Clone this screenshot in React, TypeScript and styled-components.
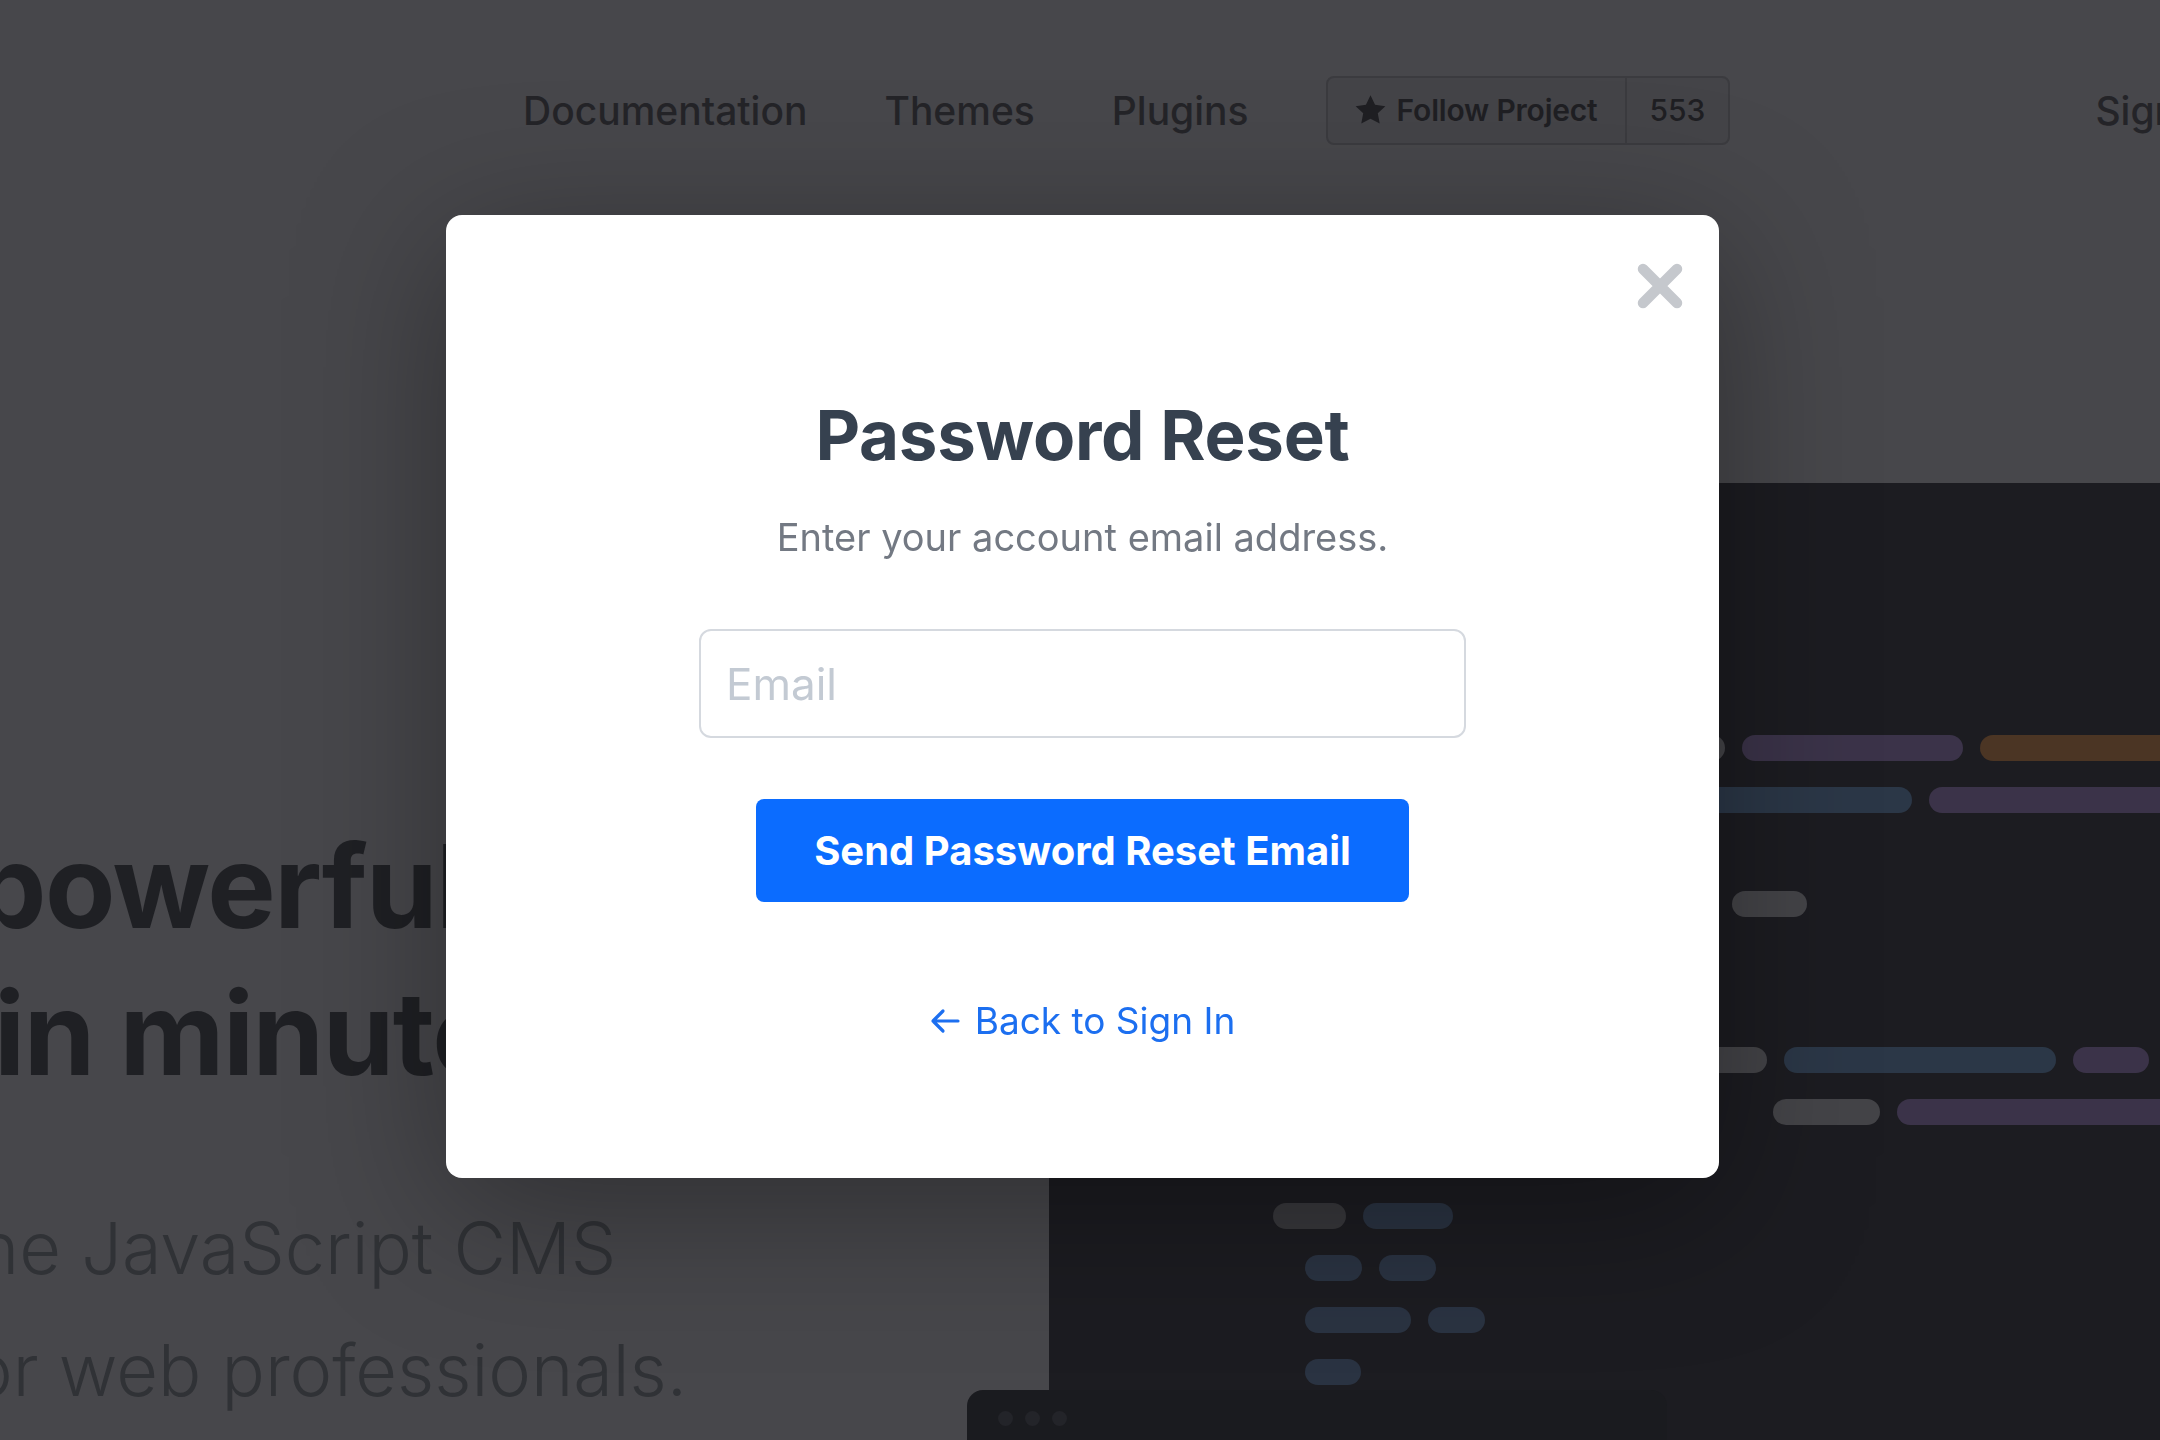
import { createGlobalStyle, styled } from "styled-components";

const GlobalStyle = createGlobalStyle`
  html, body {
    margin: 0;
    padding: 0;
    background: #47474b;
    overflow: hidden;
  }
  body {
    font-family: Inter, "Noto Sans", sans-serif;
    width: 2160px;
    height: 1440px;
  }
  * {
    box-sizing: border-box;
  }
`;

const Page = styled.div`
  width: 2160px;
  height: 1440px;
  overflow: hidden;
`;

const Nav = styled.nav`
  display: flex;
  align-items: center;
  height: 220px;
  padding-left: 523px;
  white-space: nowrap;
`;

const NavLinks = styled.div`
  display: flex;
  align-items: center;
  gap: 77px;
`;

const NavLink = styled.a`
  font-size: 39px;
  font-weight: 500;
  color: #242428;
  text-decoration: none;
  flex-shrink: 0;
`;

const SignIn = styled(NavLink)`
  margin-left: 365px;
`;

const FollowGroup = styled.div`
  display: flex;
  height: 69px;
  border: 2px solid #3b3b3f;
  border-radius: 8px;
  background: #444448;
  flex-shrink: 0;
`;

const FollowButton = styled.span`
  display: flex;
  align-items: center;
  gap: 10px;
  padding: 0 27px 0 26px;
  font-size: 30px;
  font-weight: 600;
  letter-spacing: -0.2px;
  color: #1f1f23;
`;

const FollowCount = styled.span`
  display: flex;
  align-items: center;
  padding: 0 23px;
  border-left: 2px solid #3b3b3f;
  font-size: 30px;
  font-weight: 500;
  color: #1f1f23;
`;

const Hero = styled.section`
  position: relative;
  display: grid;
  grid-template-columns: 1049px 1111px;
  height: 957px;
  margin-top: 263px;
`;

const HeroText = styled.div`
  padding-top: 330px;
  overflow: hidden;
  white-space: nowrap;
`;

const Heading = styled.h1`
  margin: 0;
  font-size: 115px;
  line-height: 147px;
  font-weight: 700;
  letter-spacing: -1.5px;
  color: #1f2024;
`;

const Tagline = styled.p`
  margin: 80px 0 0;
  font-size: 72px;
  line-height: 122px;
  font-weight: 300;
  color: #303236;
`;

const Line = styled.span<{ $shift: number }>`
  display: block;
  margin-left: ${(p) => p.$shift}px;
`;

const CodePanel = styled.div`
  background: #1c1c21;
  padding-top: 239px;
  overflow: hidden;
`;

const CodeLine = styled.div<{ $indent: number }>`
  display: flex;
  align-items: center;
  gap: 17px;
  height: 52px;
  padding-left: ${(p) => p.$indent}px;
`;

const Token = styled.span<{ $w: number; $c: string }>`
  flex-shrink: 0;
  width: ${(p) => p.$w}px;
  height: 26px;
  border-radius: 13px;
  background: ${(p) => p.$c};
`;

const WindowTab = styled.div`
  position: absolute;
  left: 967px;
  top: 907px;
  width: 700px;
  height: 90px;
  border-radius: 16px;
  background: #1a1b1f;
  display: flex;
  gap: 12px;
  padding: 21px 0 0 31px;
`;

const WindowDot = styled.span`
  width: 15px;
  height: 15px;
  border-radius: 50%;
  background: #232429;
`;

const Backdrop = styled.div`
  position: fixed;
  inset: 0;
  display: flex;
  justify-content: center;
  align-items: flex-start;
  padding: 215px 0 0 5px;
`;

const Modal = styled.div`
  position: relative;
  width: 1273px;
  background: #ffffff;
  border-radius: 16px;
  padding: 178px 0 135px;
  display: flex;
  flex-direction: column;
  align-items: center;
  box-shadow: 0 30px 150px rgba(0, 0, 0, 0.35);
`;

const CloseButton = styled.button`
  position: absolute;
  top: 47px;
  right: 35px;
  width: 48px;
  height: 48px;
  padding: 0;
  border: none;
  background: none;
  cursor: pointer;
`;

const Title = styled.h2`
  margin: 0;
  font-size: 69px;
  line-height: 85px;
  font-weight: 700;
  letter-spacing: -0.3px;
  color: #36414f;
`;

const Subtitle = styled.p`
  margin: 36px 0 0;
  font-size: 38px;
  line-height: 47px;
  color: #737983;
`;

const EmailInput = styled.input`
  margin-top: 68px;
  width: 767px;
  height: 109px;
  padding: 0 25px;
  border: 2px solid #d5d9df;
  border-radius: 12px;
  font-family: Inter, sans-serif;
  font-size: 44px;
  color: #36414f;
  outline: none;

  &::placeholder {
    color: #c3cad3;
  }
`;

const SendButton = styled.button`
  margin-top: 61px;
  width: 653px;
  height: 103px;
  border: none;
  border-radius: 8px;
  background: #0b6cff;
  color: #ffffff;
  font-family: Inter, sans-serif;
  font-size: 40px;
  font-weight: 700;
  cursor: pointer;
`;

const BackLink = styled.a`
  margin-top: 96px;
  display: inline-flex;
  align-items: center;
  gap: 15px;
  font-size: 37px;
  line-height: 45px;
  color: #1c6ff0;
  text-decoration: none;
`;

const upper = {
  gray: "#444448",
  purple: "#3b3349",
  orange: "#4b3524",
  blue: "#2b3747",
};
const lower = {
  gray: "#38383c",
  blue: "#2a3342",
};

type Row = { indent: number; tokens: [number, string][] };

const codeRows: Row[] = [
  { indent: 591, tokens: [[85, upper.gray], [221, upper.purple], [260, upper.orange]] },
  { indent: 651, tokens: [[212, upper.blue], [300, upper.purple]] },
  { indent: 0, tokens: [] },
  { indent: 683, tokens: [[75, upper.gray]] },
  { indent: 0, tokens: [] },
  { indent: 0, tokens: [] },
  { indent: 641, tokens: [[77, upper.gray], [272, upper.blue], [76, upper.purple]] },
  { indent: 724, tokens: [[107, upper.gray], [300, upper.purple]] },
  { indent: 0, tokens: [] },
  { indent: 224, tokens: [[73, lower.gray], [90, lower.blue]] },
  { indent: 256, tokens: [[57, lower.blue], [57, lower.blue]] },
  { indent: 256, tokens: [[106, lower.blue], [57, lower.blue]] },
  { indent: 256, tokens: [[56, lower.blue]] },
];

function StarIcon() {
  return (
    <svg width="33" height="32" viewBox="0 0 24 23" aria-hidden="true">
      <path
        d="M12 0.8l3.3 6.9 7.5 1-5.5 5.2 1.4 7.5L12 17.8l-6.7 3.6 1.4-7.5L1.2 8.7l7.5-1z"
        fill="#1f1f23"
      />
    </svg>
  );
}

function CloseIcon() {
  return (
    <svg width="48" height="48" viewBox="0 0 48 48" aria-hidden="true">
      <path
        d="M7 7L41 41M41 7L7 41"
        stroke="#c5c8cd"
        strokeWidth="10.5"
        strokeLinecap="round"
      />
    </svg>
  );
}

function ArrowLeftIcon() {
  return (
    <svg width="30" height="26" viewBox="0 0 30 26" aria-hidden="true">
      <path
        d="M28 13H3M13 3L3 13l10 10"
        fill="none"
        stroke="#1c6ff0"
        strokeWidth="3.2"
        strokeLinecap="round"
        strokeLinejoin="round"
      />
    </svg>
  );
}

export default function App() {
  return (
    <>
      <GlobalStyle />
      <Page>
        <Nav>
          <NavLinks>
            <NavLink href="#">Documentation</NavLink>
            <NavLink href="#">Themes</NavLink>
            <NavLink href="#">Plugins</NavLink>
            <FollowGroup>
              <FollowButton>
                <StarIcon />
                Follow Project
              </FollowButton>
              <FollowCount>553</FollowCount>
            </FollowGroup>
          </NavLinks>
          <SignIn href="#">Sign In</SignIn>
        </Nav>

        <Hero>
          <HeroText>
            <Heading>
              <Line $shift={-26}>powerful websites</Line>
              <Line $shift={-6}>in minutes.</Line>
            </Heading>
            <Tagline>
              <Line $shift={-69}>The JavaScript CMS</Line>
              <Line $shift={-53}>for web professionals.</Line>
            </Tagline>
          </HeroText>
          <CodePanel>
            {codeRows.map((row, i) => (
              <CodeLine key={i} $indent={row.indent}>
                {row.tokens.map(([w, c], j) => (
                  <Token key={j} $w={w} $c={c} />
                ))}
              </CodeLine>
            ))}
          </CodePanel>
          <WindowTab>
            <WindowDot />
            <WindowDot />
            <WindowDot />
          </WindowTab>
        </Hero>
      </Page>

      <Backdrop>
        <Modal role="dialog" aria-labelledby="reset-title">
          <CloseButton aria-label="Close">
            <CloseIcon />
          </CloseButton>
          <Title id="reset-title">Password Reset</Title>
          <Subtitle>Enter your account email address.</Subtitle>
          <EmailInput type="email" placeholder="Email" />
          <SendButton type="button">Send Password Reset Email</SendButton>
          <BackLink href="#">
            <ArrowLeftIcon />
            Back to Sign In
          </BackLink>
        </Modal>
      </Backdrop>
    </>
  );
}
